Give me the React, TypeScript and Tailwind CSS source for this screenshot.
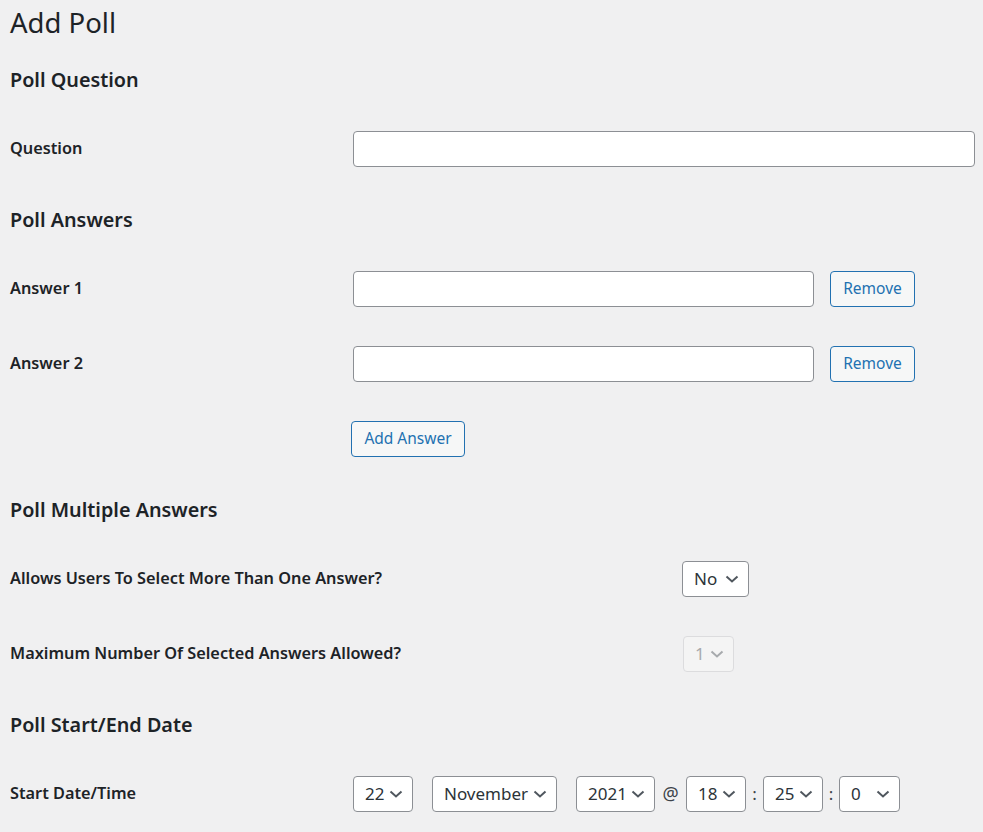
import React from "react";

const Chevron = ({ disabled }: { disabled?: boolean }) => (
  <svg width="14" height="8" viewBox="0 0 14 8" fill="none" className="shrink-0">
    <path
      d="M1.5 1.5 L7 6.5 L12.5 1.5"
      stroke={disabled ? "#a7aaad" : "#50575e"}
      strokeWidth="2"
    />
  </svg>
);

function FakeSelect({
  value,
  width,
  disabled,
}: {
  value: string;
  width: string;
  disabled?: boolean;
}) {
  return (
    <div
      className={`${width} h-[36px] shrink-0 flex items-center justify-between pl-[11px] pr-[9px] rounded-[4px] border text-[17px] ${
        disabled
          ? "border-[#dcdcde] bg-[#f4f4f4] text-[#a7aaad]"
          : "border-[#8c8f94] bg-white text-[#2c3338]"
      }`}
    >
      <span>{value}</span>
      <Chevron disabled={disabled} />
    </div>
  );
}

function TextInput({ width }: { width: string }) {
  return (
    <input
      type="text"
      className={`${width} h-[36px] shrink-0 rounded-[4px] border border-[#8c8f94] bg-white px-2 text-[17px] outline-none`}
    />
  );
}

function WpButton({ children, width }: { children: React.ReactNode; width: string }) {
  return (
    <button
      type="button"
      className={`${width} h-[36px] shrink-0 rounded-[4px] border border-[#2271b1] bg-[#f6f7f7] text-[#2271b1] text-[15.5px]`}
    >
      {children}
    </button>
  );
}

function Row({ label, children }: { label?: string; children: React.ReactNode }) {
  return (
    <div className="flex items-center h-[75px]">
      {label !== undefined && (
        <div className="w-[343px] shrink-0 text-[16.3px] font-semibold text-[#1d2327]">{label}</div>
      )}
      {children}
    </div>
  );
}

function Section({ title, children }: { title: string; children: React.ReactNode }) {
  return (
    <section className="mt-[14px]">
      <h2 className="h-[40px] flex items-center text-[19.8px] font-semibold text-[#1d2327]">{title}</h2>
      <div className="mt-[11px]">{children}</div>
    </section>
  );
}

export default function App() {
  return (
    <div className="min-h-screen w-full bg-[#f0f0f1] pl-[10px] font-['Noto_Sans',sans-serif] text-[#1d2327] overflow-hidden">
      <h1 className="h-[46px] flex items-center text-[27.5px] font-normal">Add Poll</h1>

      <Section title="Poll Question">
        <Row label="Question">
          <TextInput width="w-[622px]" />
        </Row>
      </Section>

      <Section title="Poll Answers">
        <Row label="Answer 1">
          <TextInput width="w-[461px]" />
          <div className="ml-[16px]">
            <WpButton width="w-[85px]">Remove</WpButton>
          </div>
        </Row>
        <Row label="Answer 2">
          <TextInput width="w-[461px]" />
          <div className="ml-[16px]">
            <WpButton width="w-[85px]">Remove</WpButton>
          </div>
        </Row>
        <Row>
          <div className="ml-[341px]">
            <WpButton width="w-[114px]">Add Answer</WpButton>
          </div>
        </Row>
      </Section>

      <Section title="Poll Multiple Answers">
        <div className="flex items-center h-[75px]">
          <div className="w-[672px] shrink-0 text-[16.3px] font-semibold">
            Allows Users To Select More Than One Answer?
          </div>
          <FakeSelect value="No" width="w-[67px]" />
        </div>
        <div className="flex items-center h-[75px]">
          <div className="w-[673px] shrink-0 text-[16.3px] font-semibold">
            Maximum Number Of Selected Answers Allowed?
          </div>
          <FakeSelect value="1" width="w-[51px]" disabled />
        </div>
      </Section>

      <Section title="Poll Start/End Date">
        <Row label="Start Date/Time">
          <FakeSelect value="22" width="w-[60px]" />
          <div className="ml-[19px]">
            <FakeSelect value="November" width="w-[125px]" />
          </div>
          <div className="ml-[19px]">
            <FakeSelect value="2021" width="w-[79px]" />
          </div>
          <span className="w-[31px] text-center text-[18px] text-[#3c434a]">@</span>
          <FakeSelect value="18" width="w-[60px]" />
          <span className="w-[17px] text-center text-[17px] text-[#3c434a]">:</span>
          <FakeSelect value="25" width="w-[60px]" />
          <span className="w-[16px] text-center text-[17px] text-[#3c434a]">:</span>
          <FakeSelect value="0" width="w-[61px]" />
        </Row>
      </Section>
    </div>
  );
}
